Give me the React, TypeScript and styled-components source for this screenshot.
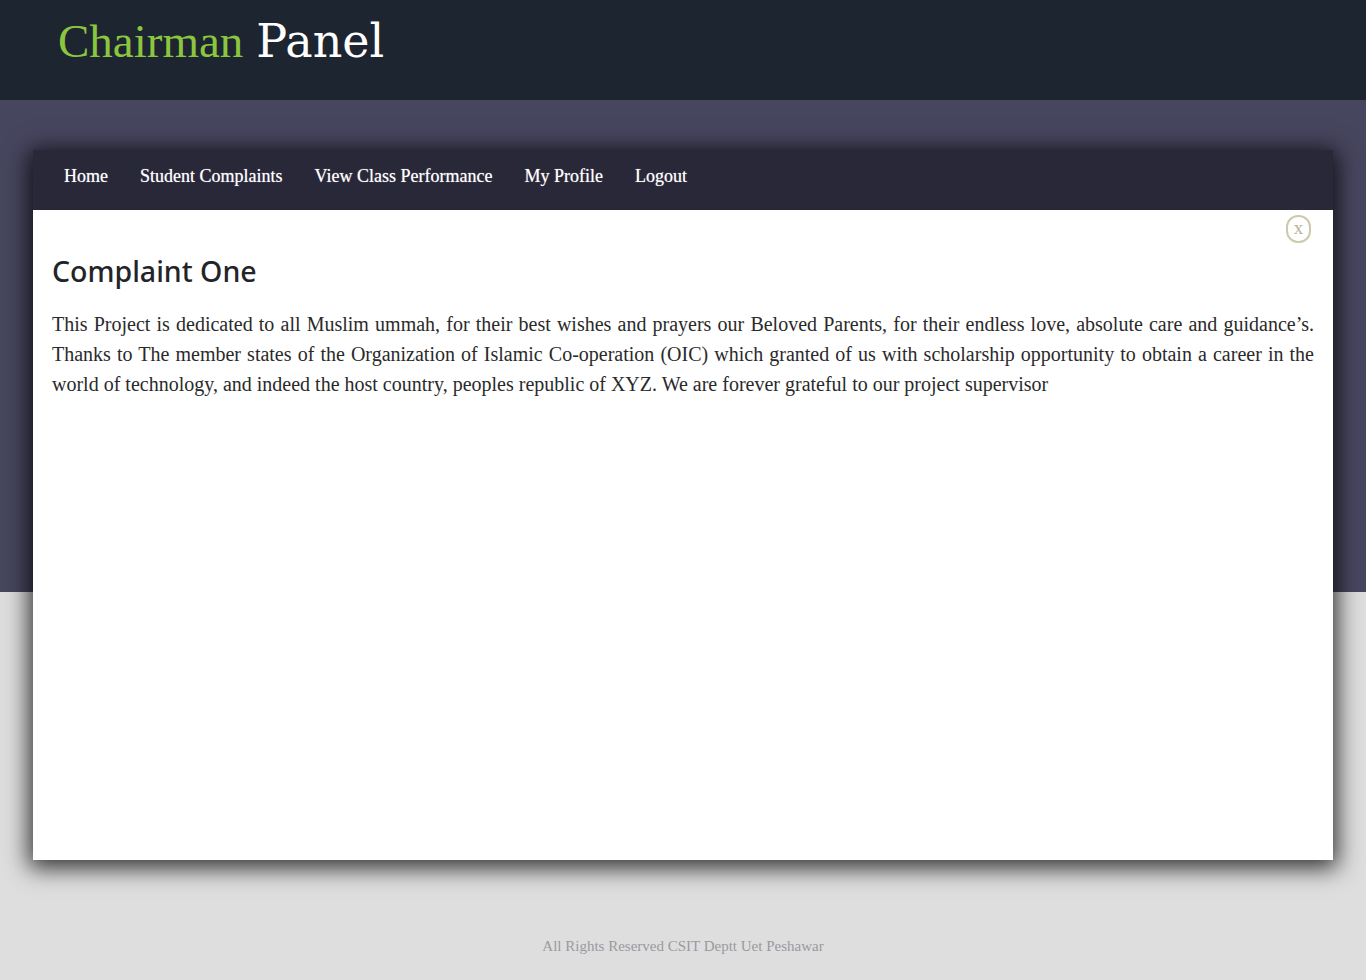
import React from "react";
import styled, { createGlobalStyle } from "styled-components";

const GlobalStyle = createGlobalStyle`
  html, body {
    margin: 0;
    padding: 0;
    background: #dedede;
    font-family: "Liberation Serif", "Times New Roman", serif;
  }
`;

const links = ["Home", "Student Complaints", "View Class Performance", "My Profile", "Logout"];

const App: React.FC = () => {
  return (
    <Page>
      <GlobalStyle />
      <Header>
        <Title>
          <Green>Chairman</Green> <White>Panel</White>
        </Title>
      </Header>
      <Main>
        <Card>
          <Nav>
            {links.map((l) => (
              <NavLink key={l} href="#">
                {l}
              </NavLink>
            ))}
          </Nav>
          <Content>
            <CloseButton>x</CloseButton>
            <Heading>Complaint One</Heading>
            <Text>
              This Project is dedicated to all Muslim ummah, for their best wishes and prayers our
              Beloved Parents, for their endless love, absolute care and guidance’s. Thanks to The
              member states of the Organization of Islamic Co-operation (OIC) which granted of us
              with scholarship opportunity to obtain a career in the world of technology, and indeed
              the host country, peoples republic of XYZ. We are forever grateful to our project
              supervisor
            </Text>
          </Content>
        </Card>
        <Footer>All Rights Reserved CSIT Deptt Uet Peshawar</Footer>
      </Main>
    </Page>
  );
};

export default App;

const Page = styled.div`
  width: 100%;
  min-height: 980px;
`;

const Header = styled.header`
  height: 100px;
  background: #1d2531;
  display: flex;
  align-items: flex-start;
  padding-left: 58px;
  box-sizing: border-box;
`;

const Title = styled.h1`
  margin: 0;
  padding-top: 11px;
  font-weight: normal;
  line-height: 60px;
  display: flex;
  align-items: baseline;
  gap: 13px;
`;

const Green = styled.span`
  color: #8cc63f;
  font-family: "Liberation Serif", "Times New Roman", serif;
  font-size: 47px;
`;

const White = styled.span`
  color: #ffffff;
  font-family: "DejaVu Serif", Georgia, serif;
  font-size: 46px;
`;

const Main = styled.main`
  background: linear-gradient(to bottom, #47465f 0, #47465f 492px, #dedede 492px);
  padding-top: 50px;
  display: flex;
  flex-direction: column;
  align-items: center;
`;

const Card = styled.div`
  width: 1300px;
  height: 710px;
  background: #ffffff;
  box-shadow: 0 4px 22px 4px rgba(0, 0, 0, 0.78);
  display: flex;
  flex-direction: column;
`;

const Nav = styled.nav`
  height: 60px;
  background: #292839;
  display: flex;
  align-items: center;
  padding: 0 0 8px 15px;
  box-sizing: border-box;
`;

const NavLink = styled.a`
  color: #ffffff;
  text-decoration: none;
  font-family: "Liberation Serif", "Times New Roman", serif;
  font-size: 18px;
  padding: 0 16px;
  text-shadow: 0 0 1px rgba(255, 255, 255, 0.6);
`;

const Content = styled.div`
  position: relative;
  flex: 1;
  padding: 40px 19px 0;
`;

const CloseButton = styled.button`
  position: absolute;
  top: 5px;
  right: 22px;
  width: 25px;
  height: 28px;
  border: 2px solid #cdc9ad;
  border-radius: 12px;
  background: #ffffff;
  color: #b7b396;
  font-family: "Liberation Serif", serif;
  font-size: 19px;
  line-height: 18px;
  padding: 0 0 3px;
  cursor: pointer;
`;

const Heading = styled.h2`
  margin: 0 0 17px;
  font-family: "Noto Sans", "Open Sans", sans-serif;
  font-weight: 500;
  font-size: 28.5px;
  line-height: 42px;
  color: #222428;
`;

const Text = styled.p`
  margin: 0;
  font-family: "Liberation Serif", "Times New Roman", serif;
  font-size: 20px;
  line-height: 30px;
  color: #2a2a2a;
  text-align: justify;
`;

const Footer = styled.footer`
  margin-top: 76px;
  font-family: "Liberation Serif", "Times New Roman", serif;
  font-size: 15px;
  color: #999aa0;
  line-height: 20px;
`;
